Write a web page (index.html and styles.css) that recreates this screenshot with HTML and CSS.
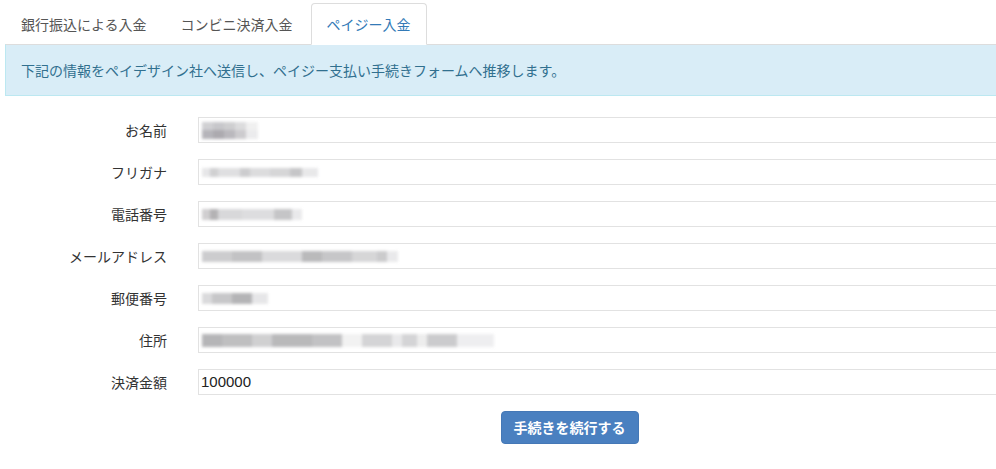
FILE: index.html
```html
<!DOCTYPE html>
<html lang="ja">
<head>
<meta charset="utf-8">
<title>ペイジー入金</title>
<link rel="stylesheet" href="styles.css">
</head>
<body>
<div class="page">
  <ul class="tabs">
    <li class="tab"><a>銀行振込による入金</a></li>
    <li class="tab"><a>コンビニ決済入金</a></li>
    <li class="tab active"><a>ペイジー入金</a></li>
  </ul>
  <div class="alert">下記の情報をペイデザイン社へ送信し、ペイジー支払い手続きフォームへ推移します。</div>
  <form class="form">
    <div class="row">
      <label class="label">お名前</label>
      <div class="input"><span class="mask mask-name"></span></div>
    </div>
    <div class="row">
      <label class="label">フリガナ</label>
      <div class="input"><span class="mask mask-kana"></span></div>
    </div>
    <div class="row">
      <label class="label">電話番号</label>
      <div class="input"><span class="mask mask-tel"></span></div>
    </div>
    <div class="row">
      <label class="label">メールアドレス</label>
      <div class="input"><span class="mask mask-mail"></span></div>
    </div>
    <div class="row">
      <label class="label">郵便番号</label>
      <div class="input"><span class="mask mask-zip"></span></div>
    </div>
    <div class="row">
      <label class="label">住所</label>
      <div class="input"><span class="mask mask-addr"></span></div>
    </div>
    <div class="row">
      <label class="label">決済金額</label>
      <div class="input"><span class="value">100000</span></div>
    </div>
    <div class="actions">
      <button type="button" class="btn">手続きを続行する</button>
    </div>
  </form>
</div>
</body>
</html>
```

FILE: styles.css
```css
html, body {
  margin: 0;
  padding: 0;
  background: #fff;
}
body {
  font-family: "Noto Sans CJK JP", "Liberation Sans", sans-serif;
  font-size: 14px;
  line-height: 20px;
  color: #333;
}
.page {
  width: 991px;
  padding: 3px 0 0 5px;
}
.tabs {
  list-style: none;
  margin: 0;
  padding: 0;
  display: flex;
  border-bottom: 1px solid #ddd;
}
.tab {
  margin: 0 2px -1px 0;
}
.tab a {
  display: block;
  padding: 10px 15px;
  border: 1px solid transparent;
  border-radius: 4px 4px 0 0;
  color: #555;
}
.tab.active a {
  color: #337ab7;
  background: #fff;
  border-color: #ddd #ddd transparent;
}
.alert {
  background: #d9edf7;
  border: 1px solid #bce8f1;
  border-top-color: #ddd;
  border-right: none;
  color: #31708f;
  padding: 15px 15px;
  margin-top: -1px;
}
.form {
  margin-top: 21px;
}
.row {
  display: grid;
  grid-template-columns: 162px 1fr;
  column-gap: 31px;
  align-items: center;
  margin-bottom: 16px;
}
.label {
  text-align: right;
  color: #333;
}
.input {
  height: 26px;
  box-sizing: border-box;
  border: 1px solid #e2e2e2;
  border-right: none;
  padding: 0 2px;
  display: flex;
  align-items: center;
  background: #fff;
}
.value {
  font-family: "Liberation Sans", sans-serif;
  font-size: 15px;
  color: #222;
}
.mask {
  display: block;
  height: 9px;
  margin-left: 1px;
  filter: blur(1.4px);
  opacity: 0.85;
}
.mask-name {
  width: 56px;
  height: 17px;
  background:
    linear-gradient(90deg, #c8c8cc 0 11px, #bebec2 11px 22px, #c6c6c8 22px 33px, #d6d6d8 33px 44px, #eeeeee 44px 56px) top / 100% 8px no-repeat,
    linear-gradient(90deg, #a9a8ae 0 11px, #9e9ca2 11px 22px, #aeacb2 22px 33px, #c4c2c6 33px 44px, #e8e8ea 44px 56px) bottom / 100% 9px no-repeat;
}
.mask-kana {
  width: 116px;
  background: linear-gradient(90deg, #e2e2e4 0 8px, #c8c8ca 8px 16px, #dadadc 16px 38px, #c4c4c6 38px 48px, #d6d6d8 48px 68px, #cfcfd1 68px 88px, #bcbcbe 88px 100px, #e4e4e6 100px 116px);
}
.mask-tel {
  width: 100px;
  height: 11px;
  background: linear-gradient(90deg, #c8c6c8 0 8px, #a7a5a8 8px 16px, #d2d2d4 16px 40px, #d8d8da 40px 72px, #bcbcbe 72px 90px, #e6e6e8 90px 100px);
}
.mask-mail {
  width: 196px;
  height: 11px;
  background: linear-gradient(90deg, #c4c4c6 0 30px, #b8b8ba 30px 60px, #d4d4d6 60px 100px, #aeaeb0 100px 120px, #bdbdbf 120px 150px, #cfcfd1 150px 175px, #c2c2c4 175px 185px, #e6e6e8 185px 196px);
}
.mask-zip {
  width: 66px;
  height: 11px;
  background: linear-gradient(90deg, #d4d4d6 0 10px, #bebec0 10px 30px, #a8a8aa 30px 50px, #e2e2e4 50px 66px);
}
.mask-addr {
  width: 292px;
  height: 13px;
  background: linear-gradient(90deg, #a9a9ab 0 20px, #b4b4b6 20px 50px, #c8c8ca 50px 70px, #adadaf 70px 110px, #b8b8ba 110px 140px, #f0f0f0 140px 160px, #cdcdcf 160px 190px, #e6e6e8 190px 200px, #cdcdcf 200px 215px, #eaeaea 215px 225px, #c3c3c5 225px 255px, #ececee 255px 292px);
}
.actions {
  display: flex;
  justify-content: center;
  padding-left: 138px;
}
.btn {
  font-family: "Noto Sans CJK JP", "Liberation Sans", sans-serif;
  font-size: 14px;
  font-weight: bold;
  line-height: 19px;
  color: #fff;
  background: #4a80c0;
  border: 1px solid #4578b6;
  border-radius: 4px;
  padding: 6px 12px;
  cursor: pointer;
}
```
